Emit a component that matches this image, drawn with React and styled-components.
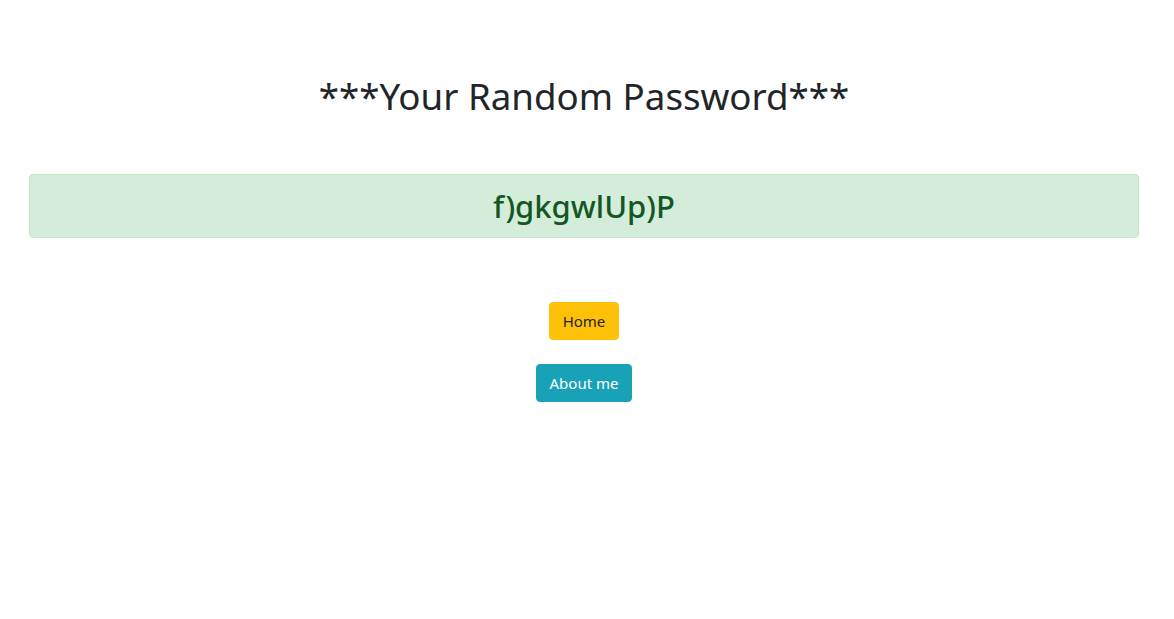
import React from 'react';
import styled, { createGlobalStyle } from 'styled-components';

const GlobalStyle = createGlobalStyle`
  html, body {
    margin: 0;
    background: #fff;
  }
  body {
    font-family: 'Noto Sans', 'Open Sans', sans-serif;
    color: #212529;
  }
`

const Page = styled.div`
  padding: 0 35px 0 29px;
  text-align: center;
`

const Title = styled.h1`
  font-size: 36.7px;
  font-weight: 400;
  line-height: 48px;
  margin: 72px 0 54px;
`

const Alert = styled.div`
  background: #d4edda;
  border: 1px solid #c3e6cb;
  border-radius: 4px;
  color: #155724;
  padding: 12px 20px;
`

const Password = styled.h2`
  font-size: 31px;
  font-weight: 500;
  line-height: 38px;
  margin: 0;
`

const Buttons = styled.div`
  display: flex;
  flex-direction: column;
  align-items: center;
  gap: 24px;
  margin-top: 64px;
`

const Button = styled.a`
  display: inline-block;
  font-size: 15px;
  line-height: 24px;
  padding: 6px 12.5px;
  border: 1px solid ${p => p.bg};
  border-radius: 4px;
  background: ${p => p.bg};
  color: ${p => p.fg};
  text-decoration: none;
  cursor: pointer;
`

export default function App() {
  return (
    <Page>
      <GlobalStyle />
      <Title>***Your Random Password***</Title>
      <Alert>
        <Password>f)gkgwlUp)P</Password>
      </Alert>
      <Buttons>
        <Button bg="#ffc107" fg="#212529">Home</Button>
        <Button bg="#17a2b8" fg="#fff">About me</Button>
      </Buttons>
    </Page>
  );
}
